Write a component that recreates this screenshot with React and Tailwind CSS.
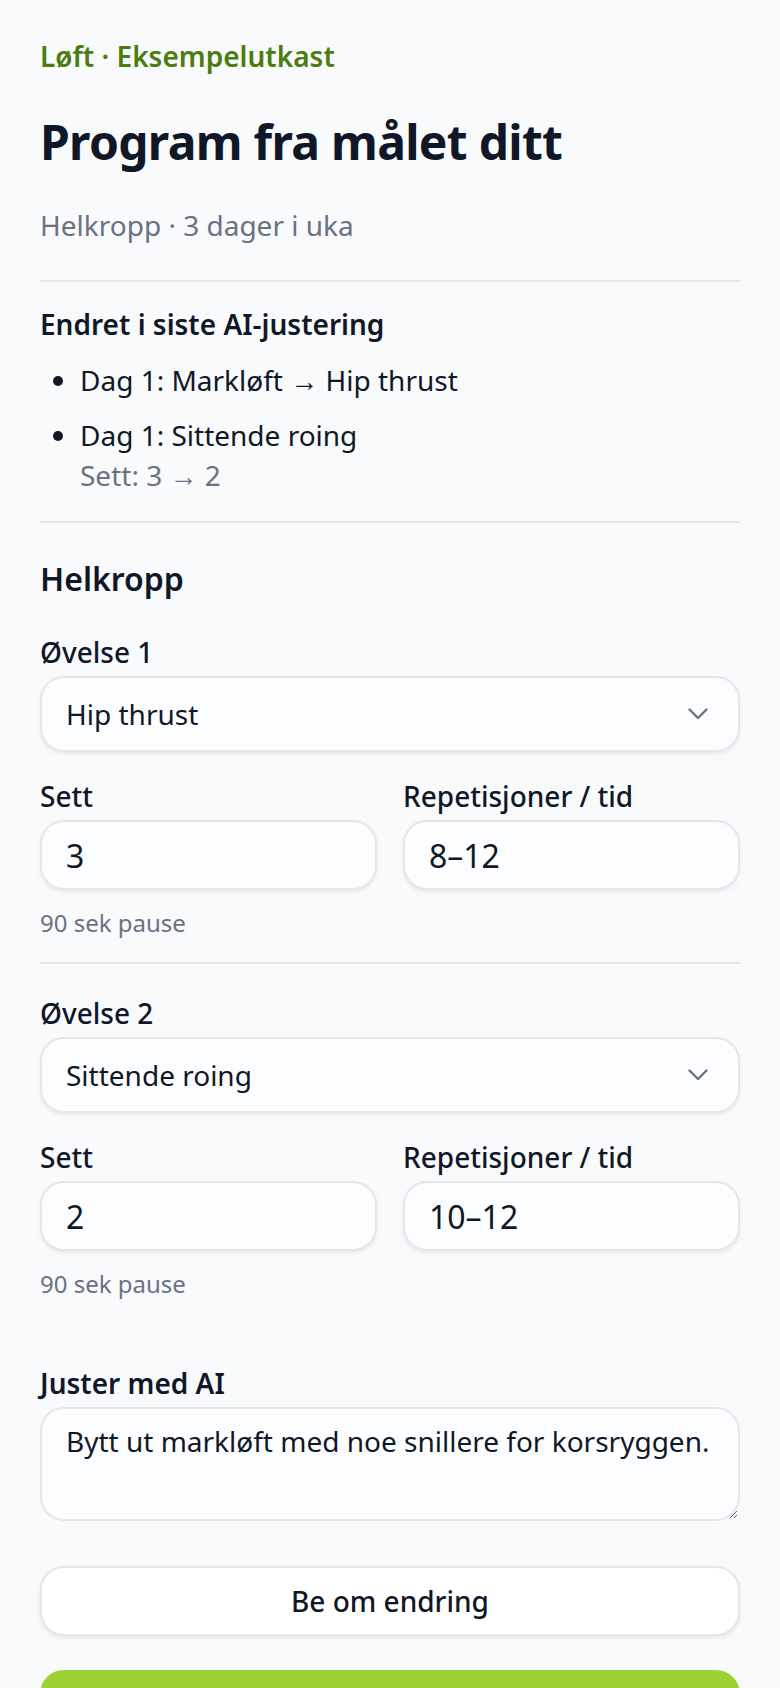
import React, { useState } from "react";

const exercisesInit = [
  { name: "Hip thrust", sets: "3", reps: "8–12", rest: "90 sek pause" },
  { name: "Sittende roing", sets: "2", reps: "10–12", rest: "90 sek pause" },
];

const options = ["Hip thrust", "Markløft", "Sittende roing", "Knebøy", "Benkpress"];

function Chevron() {
  return (
    <svg width="20" height="12" viewBox="0 0 20 12" fill="none" className="pointer-events-none absolute right-[32px] top-1/2 -translate-y-1/2">
      <path d="M1.5 1.5L10 10L18.5 1.5" stroke="#6b7280" strokeWidth="2.4" strokeLinecap="round" strokeLinejoin="round" />
    </svg>
  );
}

function ExerciseBlock({ index, exercise, onChange }) {
  return (
    <div>
      <label className="block text-[28px] leading-[40px] font-medium text-gray-900">Øvelse {index + 1}</label>
      <div className="relative mt-[4px]">
        <select
          value={exercise.name}
          onChange={(e) => onChange({ ...exercise, name: e.target.value })}
          className="block h-[76px] w-full appearance-none rounded-[24px] border-2 border-[#e5e7eb] bg-[#fcfdfe] pl-[24px] pr-[64px] text-[28px] text-gray-900 shadow-[0_2px_4px_rgba(0,0,0,0.07)] outline-none"
        >
          {options.map((o) => (
            <option key={o}>{o}</option>
          ))}
        </select>
        <Chevron />
      </div>
      <div className="mt-[24px] grid grid-cols-2 gap-[26px]">
        <div>
          <label className="block text-[28px] leading-[40px] font-medium text-gray-900">Sett</label>
          <input
            value={exercise.sets}
            onChange={(e) => onChange({ ...exercise, sets: e.target.value })}
            className="mt-[4px] block h-[70px] w-full rounded-[24px] border-2 border-[#e5e7eb] bg-[#fcfdfe] px-[24px] text-[32px] text-gray-900 shadow-[0_2px_4px_rgba(0,0,0,0.07)] outline-none"
          />
        </div>
        <div>
          <label className="block text-[28px] leading-[40px] font-medium text-gray-900">Repetisjoner / tid</label>
          <input
            value={exercise.reps}
            onChange={(e) => onChange({ ...exercise, reps: e.target.value })}
            className="mt-[4px] block h-[70px] w-full rounded-[24px] border-2 border-[#e5e7eb] bg-[#fcfdfe] px-[24px] text-[32px] text-gray-900 shadow-[0_2px_4px_rgba(0,0,0,0.07)] outline-none"
          />
        </div>
      </div>
      <p className="mt-[17px] text-[24px] leading-[32px] text-gray-500">{exercise.rest}</p>
    </div>
  );
}

export default function App() {
  const [exercises, setExercises] = useState(exercisesInit);
  const [prompt, setPrompt] = useState("Bytt ut markløft med noe snillere for korsryggen.");

  const updateExercise = (i, next) => {
    setExercises(exercises.map((ex, j) => (j === i ? next : ex)));
  };

  return (
    <div className="min-h-screen bg-[#f8fafc] font-['Noto_Sans',sans-serif] text-gray-900">
      <main className="px-[40px] pt-[36px] pb-[60px]">
        <p className="text-[28px] leading-[40px] font-semibold text-[#4d7c0f]">Løft · Eksempelutkast</p>
        <h1 className="mt-[38px] text-[48px] leading-[56px] font-bold tracking-[-0.7px] text-gray-900">Program fra målet ditt</h1>
        <p className="mt-[35px] text-[28px] leading-[40px] text-gray-500">Helkropp · 3 dager i uka</p>

        <hr className="mt-[35px] border-t-2 border-[#e5e7eb]" />

        <section className="mt-[22px]">
          <h2 className="text-[28px] leading-[40px] font-semibold">Endret i siste AI-justering</h2>
          <ul className="mt-[16px] list-disc space-y-[15px] pl-[40px] text-[28px] leading-[40px]">
            <li>Dag 1: Markløft → Hip thrust</li>
            <li>
              Dag 1: Sittende roing
              <div className="text-gray-500">Sett: 3 → 2</div>
            </li>
          </ul>
        </section>

        <hr className="mt-[26px] border-t-2 border-[#e5e7eb]" />

        <h2 className="mt-[34px] text-[32px] leading-[44px] font-semibold">Helkropp</h2>

        <div className="mt-[31px]">
          <ExerciseBlock index={0} exercise={exercises[0]} onChange={(n) => updateExercise(0, n)} />
        </div>
        <hr className="mt-[23px] border-t-2 border-[#e5e7eb]" />
        <div className="mt-[29px]">
          <ExerciseBlock index={1} exercise={exercises[1]} onChange={(n) => updateExercise(1, n)} />
        </div>

        <div className="mt-[63px]">
          <label className="block text-[28px] leading-[40px] font-semibold">Juster med AI</label>
          <textarea
            value={prompt}
            onChange={(e) => setPrompt(e.target.value)}
            className="mt-[4px] block h-[114px] w-full rounded-[24px] border-2 border-[#e5e7eb] bg-[#fcfdfe] px-[24px] py-[12px] text-[28px] leading-[40px] text-gray-900 outline-none"
          />
        </div>

        <button className="mt-[45px] block h-[70px] w-full rounded-[24px] border-2 border-[#e5e7eb] bg-white text-[28px] font-medium text-gray-900 shadow-[0_2px_4px_rgba(0,0,0,0.08)]">
          Be om endring
        </button>
        <button aria-label="Lagre program" className="mt-[34px] block h-[76px] w-full rounded-[24px] bg-[#9bd335]" />
      </main>
    </div>
  );
}
